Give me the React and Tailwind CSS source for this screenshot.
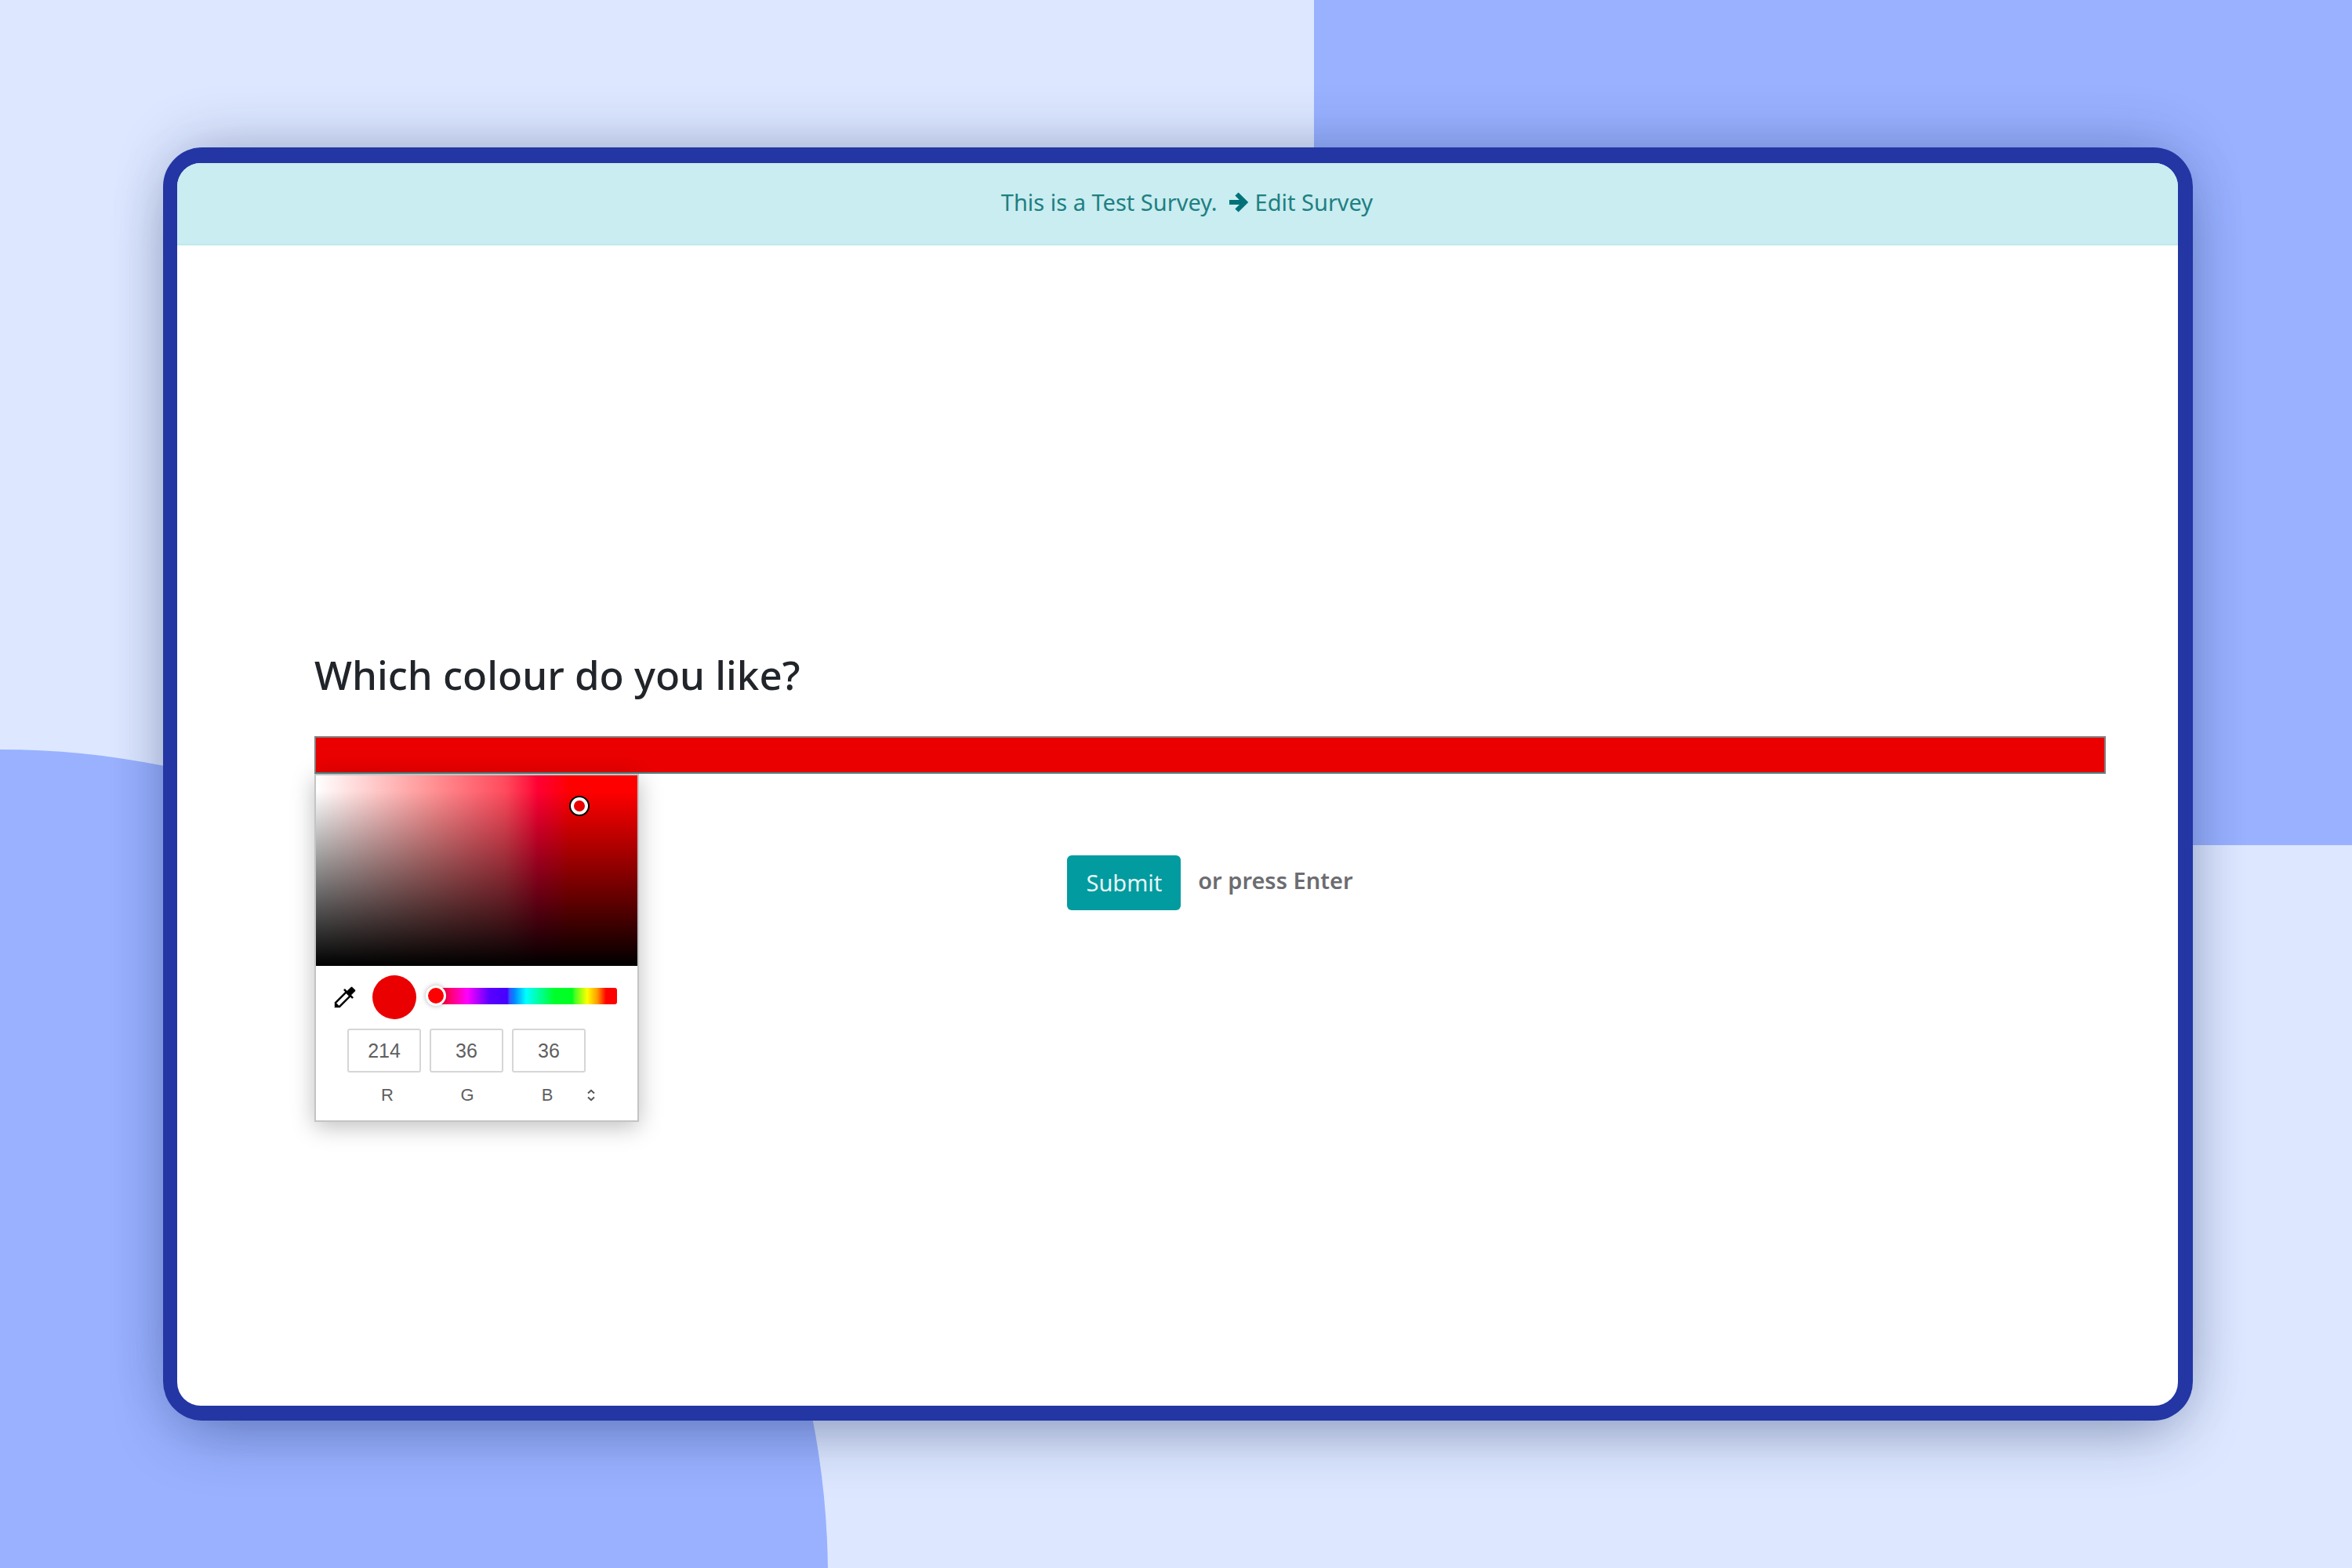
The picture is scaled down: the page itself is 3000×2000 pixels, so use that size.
const channels = [
  { label: "R", value: 214, id: "channel-r" },
  { label: "G", value: 36, id: "channel-g" },
  { label: "B", value: 36, id: "channel-b" },
];

function Backdrop() {
  return (
    <div className="absolute inset-0 overflow-hidden" aria-hidden="true">
      <div className="absolute top-0 right-0 left-[1676px] h-[1078px] bg-[#99b1ff]" />
      <div className="absolute top-[956px] -left-[1056px] size-[2112px] rounded-full bg-[#99b1ff]" />
    </div>
  );
}

function ArrowRight() {
  return (
    <svg
      viewBox="0 0 26 26"
      className="size-[26px]"
      fill="none"
      stroke="#017277"
      strokeWidth="6"
    >
      <path d="M1 13H20" />
      <path d="M10.5 2.5 21 13 10.5 23.5" />
    </svg>
  );
}

function TestBanner() {
  return (
    <header className="flex h-[105px] items-center justify-center border-b-2 border-[#bfe9ee] bg-[#c9edf0] pb-1 pl-6 text-[29px] leading-[40px] text-[#1f7f82]">
      <span>This is a Test Survey.</span>
      <a href="#edit" className="ml-3.5 flex items-center gap-2">
        <ArrowRight />
        Edit Survey
      </a>
    </header>
  );
}

function Eyedropper() {
  return (
    <svg viewBox="0 0 24 24" className="size-9" fill="#000" stroke="#fff" strokeWidth="0.4">
      <path d="M20.71 5.63l-2.34-2.34c-.39-.39-1.02-.39-1.41 0l-3.12 3.12-1.93-1.91-1.41 1.41 1.42 1.42L3 16.25V21h4.75l8.92-8.92 1.42 1.42 1.41-1.41-1.92-1.92 3.12-3.12c.4-.4.4-1.03.01-1.42zM6.92 19L5 17.08l8.06-8.06 1.92 1.92L6.92 19z" />
    </svg>
  );
}

function ColourPicker() {
  return (
    <div className="absolute top-full left-0 w-[414px] border-2 border-[#c4c4c4] bg-white pb-[18px] font-['Liberation_Sans',sans-serif] text-[#5f5f5f] shadow-[0_6px_28px_rgba(0,0,0,0.26)]">
      <div
        role="slider"
        aria-label="Saturation and brightness"
        aria-valuenow={214}
        tabIndex={0}
        className="relative h-[243px] bg-[linear-gradient(to_top,#000,transparent_92%),linear-gradient(to_right,#fff,#ffc6c6_19%,#ff9294_36%,#ff4a5c_59%,#ff1a40_66%,#ff0033_69%,#ff0018_75%,#ff0000_79%)]"
      >
        <span className="absolute top-[26px] left-[323px] flex size-[26px] items-center justify-center rounded-full border-2 border-black bg-white">
          <span className="size-3.5 rounded-full bg-[#ea0000]" />
        </span>
      </div>
      <div className="mt-3 flex h-14 items-center pr-[26px] pl-[19px]">
        <button type="button" aria-label="Pick a colour from the screen">
          <Eyedropper />
        </button>
        <span className="ml-[17px] size-14 rounded-full bg-[#ea0000]" />
        <input
          type="range"
          aria-label="Hue"
          min="0"
          max="360"
          defaultValue="0"
          className="-mt-1 ml-3 h-[21px] min-w-0 flex-1 appearance-none rounded-r-[3px] bg-[linear-gradient(to_right,transparent_13px,#ff0040_13px,#ff0058_28px,#ff00ff_53px,#5a00ff_81px,#4400ff_104px,#3355ff_107px,#0088ff_113px,#00ffff_128px,#00ff2a_164px,#00ff20_187px,#44ff20_190px,#ffff00_206px,#ff9a00_219px,#ff0000_230px)] [&::-webkit-slider-thumb]:size-[26px] [&::-webkit-slider-thumb]:appearance-none [&::-webkit-slider-thumb]:rounded-full [&::-webkit-slider-thumb]:border-3 [&::-webkit-slider-thumb]:border-white [&::-webkit-slider-thumb]:bg-[#ff0000] [&::-webkit-slider-thumb]:shadow-[0_0_6px_rgba(0,0,0,0.3)]"
        />
      </div>
      <div className="mt-3 flex gap-[11px] pl-10">
        {channels.map((c) => (
          <input
            key={c.id}
            id={c.id}
            defaultValue={c.value}
            className="h-14 w-[94px] rounded-[3px] border-2 border-[#d6d6d6] bg-white text-center text-[25px]"
          />
        ))}
      </div>
      <div className="mt-[15px] flex items-center pl-10">
        {channels.map((c) => (
          <label key={c.id} htmlFor={c.id} className="w-[102px] text-center text-[22px] leading-7">
            {c.label}
          </label>
        ))}
        <button type="button" aria-label="Change colour format">
          <svg viewBox="0 0 10 16" className="h-4 w-2.5" fill="none" stroke="#555" strokeWidth="2">
            <path d="M1 5.5 5 1.8 9 5.5M1 10.5 5 14.2 9 10.5" />
          </svg>
        </button>
      </div>
    </div>
  );
}

function Question() {
  return (
    <form className="flex flex-1 flex-col justify-center pr-[92px] pb-[115px] pl-[175px]">
      <label htmlFor="colour" className="text-[51px] leading-[60px] font-medium text-[#212529]">
        Which colour do you like?
      </label>
      <div className="relative mt-[49px]">
        <input
          id="colour"
          type="color"
          defaultValue="#ea0000"
          className="block h-12 w-full appearance-none border-2 border-[#858080] border-b-[#4d8888] bg-[#ea0000] p-0 [&::-webkit-color-swatch]:border-0 [&::-webkit-color-swatch-wrapper]:p-0"
        />
        <ColourPicker />
      </div>
      <div className="mt-[104px] flex items-center justify-center gap-[22px]">
        <button type="button" className="h-[70px] rounded-md bg-[#019ba0] px-6 text-[29px] text-[#e8f6f6]">
          Submit
        </button>
        <span className="pb-1.5 text-[29px] font-semibold text-[#6c6c70]">or press Enter</span>
      </div>
    </form>
  );
}

export default function App() {
  return (
    <div className="relative flex min-h-screen bg-[#dde7ff] pt-[188px] pr-[203px] pb-[188px] pl-[208px] font-['Noto_Sans',sans-serif]">
      <Backdrop />
      <div className="relative flex flex-1 rounded-[50px] bg-[#2336a4] pt-5 pr-[19px] pb-[19px] pl-[18px] shadow-[0_30px_80px_-20px_rgba(20,40,90,0.4),0_-16px_80px_-20px_rgba(20,40,90,0.3)]">
        <main className="flex flex-1 flex-col overflow-hidden rounded-[30px] bg-white">
          <TestBanner />
          <Question />
        </main>
      </div>
    </div>
  );
}
